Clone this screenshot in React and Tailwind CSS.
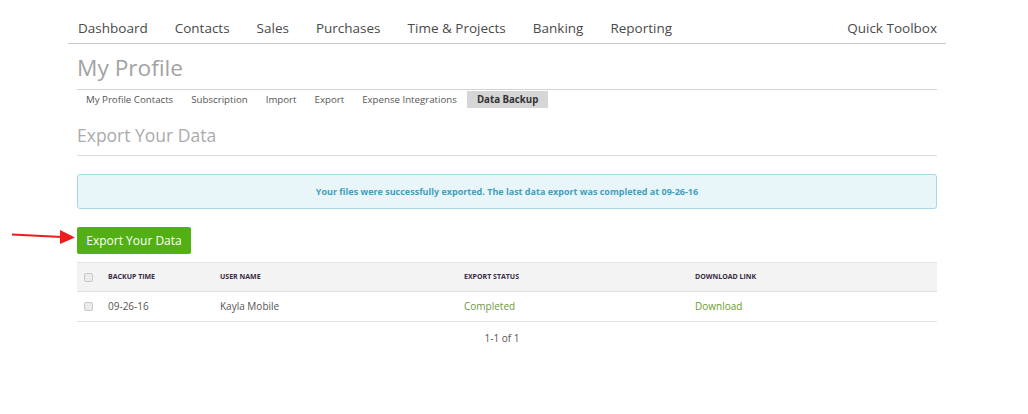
export default function App() {
  const nav = ["Dashboard", "Contacts", "Sales", "Purchases", "Time & Projects", "Banking", "Reporting"];
  const tabs = ["My Profile Contacts", "Subscription", "Import", "Export", "Expense Integrations"];
  const Box = () => (
    <span className="inline-block w-[9px] h-[9px] rounded-[2px] border border-[#c8c8c8] bg-[#ececec]" />
  );
  return (
    <div className="w-[1028px] h-[414px] bg-white relative" style={{ fontFamily: '"Open Sans", sans-serif' }}>
      <div className="ml-[68px] w-[878px]">
        <div className="flex items-end h-[44px] pb-[5px] px-[10px] border-b border-[#c9c9c9] text-[13.5px] text-[#4a4a4a]">
          <div className="flex gap-[27px]">
            {nav.map((n) => (
              <span key={n}>{n}</span>
            ))}
          </div>
          <span className="ml-auto mr-[-1px]">Quick Toolbox</span>
        </div>
      </div>
      <div className="ml-[77px] w-[860px]">
        <div className="text-[22.7px] leading-[30px] text-[#a3a3a3] mt-[9px]">My Profile</div>
        <div className="flex border-t border-[#d3d3d3] mt-[6px] pl-[9px] text-[9.7px] text-[#555] h-[19px] items-center pt-[2px]">
          {tabs.map((t) => (
            <span key={t} className="mr-[18px]">{t}</span>
          ))}
          <span className="bg-[#d6d6d6] font-bold text-[#333] h-[17px] mt-[-2px] pt-[2px] flex items-center px-[10px] ml-[-8px]">Data Backup</span>
        </div>
        <div className="text-[17.5px] text-[#ababab] mt-[15px] leading-[24px] pb-[8px] border-b border-[#dcdcdc]">Export Your Data</div>
        <div className="mt-[18px] h-[35px] rounded-[3px] border border-[#a7d9e3] bg-[#e9f6f9] flex items-center justify-center text-[9px] font-bold text-[#3f9fbd]">
          Your files were successfully exported. The last data export was completed at 09-26-16
        </div>
        <div className="mt-[18px] flex">
          <div className="h-[27px] w-[114px] rounded-[2px] bg-[#52b014] text-white text-[12px] flex items-center justify-center">Export Your Data</div>
        </div>
        <div className="mt-[8px] border-t border-[#e4e4e4]">
          <div className="flex items-center h-[29px] bg-[#f3f3f3] border-b border-[#dedede] text-[7px] font-bold text-[#3a2b44] uppercase">
            <div className="w-[31px] pl-[7px] flex"><Box /></div>
            <div className="w-[112px]">Backup Time</div>
            <div className="w-[244px]">User Name</div>
            <div className="w-[231px]">Export Status</div>
            <div>Download Link</div>
          </div>
          <div className="flex items-center h-[30px] border-b border-[#e2e2e2] text-[10px] text-[#555]">
            <div className="w-[31px] pl-[7px] flex"><Box /></div>
            <div className="w-[112px]">09-26-16</div>
            <div className="w-[244px]">Kayla Mobile</div>
            <div className="w-[231px] text-[#6b9a3e]">Completed</div>
            <div className="text-[#6a9d2a]">Download</div>
          </div>
          <div className="text-center text-[10px] text-[#555] mt-[9px] pr-[10px]">1-1 of 1</div>
        </div>
      </div>
      <svg className="absolute left-[10px] top-[229px]" width="66" height="16" viewBox="0 0 66 16">
        <line x1="2" y1="5.5" x2="52" y2="8" stroke="#ee1c1c" strokeWidth="2" />
        <polygon points="50,1 65,8.5 50,15" fill="#ee1c1c" />
      </svg>
    </div>
  );
}
